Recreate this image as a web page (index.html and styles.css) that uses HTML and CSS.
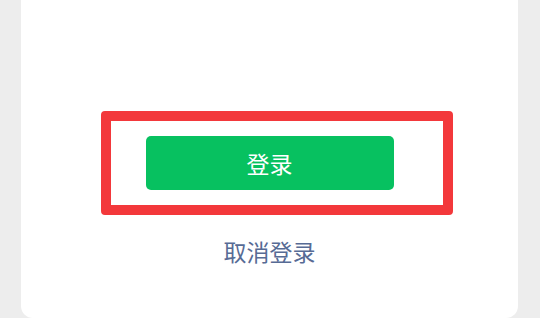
FILE: index.html
```html
<!DOCTYPE html>
<html lang="zh-CN">
<head>
    <meta charset="UTF-8">
    <meta name="viewport" content="width=device-width, initial-scale=1.0">
    <title>登录确认</title>
    <link rel="stylesheet" href="styles.css">
</head>
<body>

<div class="card">
    <!-- Confirm area -->
    <div class="actions">
        <div class="btn-wrap">
            <button type="button" class="btn">登录</button>
            <span class="highlight"></span>
        </div>
        <span class="link">取消登录</span>
    </div>
</div>

</body>
</html>
```

FILE: styles.css
```css
/* General Page Styling */
body {
    margin: 0;
    height: 318px;
    overflow: hidden;
    background: #ededed;
    font-family: "Noto Sans CJK SC", "Noto Sans", sans-serif;
}

/* White Card */
.card {
    margin: 0 22px 0 21px;
    height: 318px;
    background: #fff;
    border-radius: 0 0 12px 12px;
}

.actions {
    display: flex;
    flex-direction: column;
    align-items: center;
    padding-top: 136px;
}

/* Button */
.btn-wrap {
    position: relative;
}

.btn {
    display: block;
    width: 248px;
    height: 54px;
    padding: 0;
    border: none;
    border-radius: 5px;
    background: #07c160;
    color: #fff;
    font-family: inherit;
    font-size: 23px;
    line-height: 54px;
    cursor: pointer;
}

/* Red annotation box */
.highlight {
    position: absolute;
    left: -45px;
    top: -25px;
    width: 352px;
    height: 104px;
    box-sizing: border-box;
    border: 10px solid #f3383b;
    border-radius: 4px;
}

/* Cancel link */
.link {
    margin-top: 45px;
    font-size: 23px;
    line-height: 32px;
    color: #576b95;
    cursor: pointer;
}
```
